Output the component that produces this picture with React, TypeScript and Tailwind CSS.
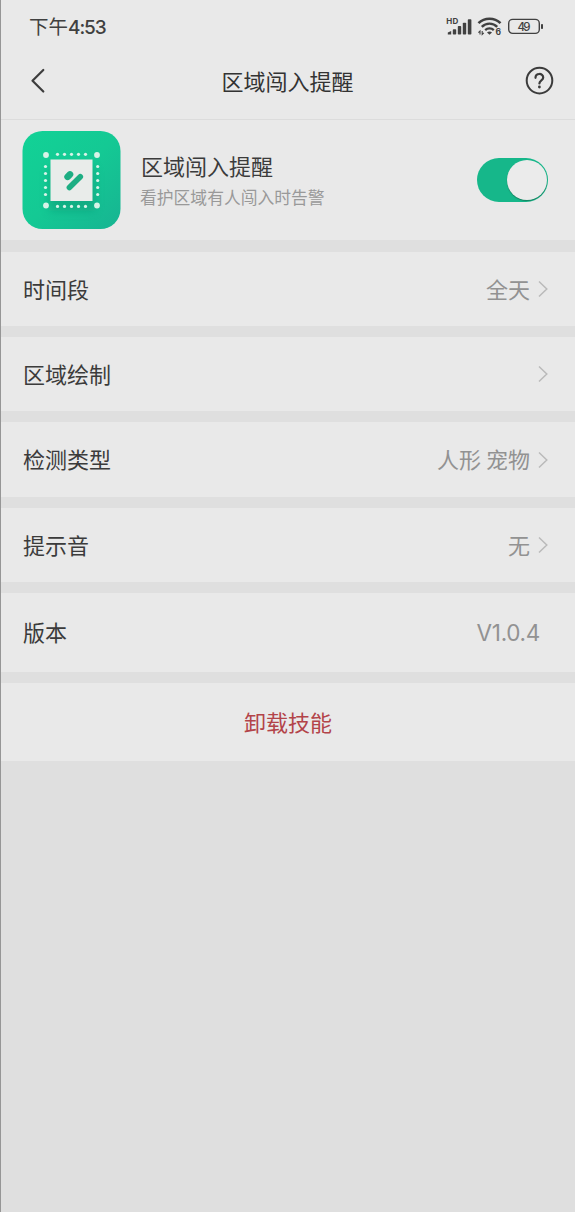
import React from "react";

type RowProps = {
    label: string;
    value?: string;
    arrow?: boolean;
    className?: string;
}

function StatusBar() {
    return (
        <div className="flex h-[42px] items-start justify-between pl-[28px] pr-[31px] pt-[12px]">
            <span className="text-[19.5px] leading-[28px] text-[#404040]">
                下午<span className="font-[Inter] text-[19px] font-medium tracking-[-1.1px]">4:53</span>
            </span>
            <div className="mt-[4px] flex items-start text-[#414141]">
                <svg width="27" height="20" viewBox="0 0 27 20" fill="currentColor">
                    <text x="0.3" y="8" fontSize="8" fontWeight="700" fontFamily="Inter" textLength="12">HD</text>
                    <path d="M1.8 18.5V16.6L5.2 15V18.5Z" />
                    <rect x="6.8" y="13.2" width="3.4" height="5.3" rx="0.8" />
                    <rect x="11.8" y="10" width="3.4" height="8.5" rx="0.8" />
                    <rect x="16.8" y="6.8" width="3.4" height="11.7" rx="0.8" />
                    <rect x="21.8" y="3.2" width="3.6" height="15.3" rx="0.8" />
                </svg>
                <svg className="ml-[4px]" width="25" height="20" viewBox="0 0 25 20" fill="none" stroke="currentColor">
                    <path d="M1.5 7.2C7.5 1.2 17.5 1.2 23.5 7.2" strokeWidth="2.6" />
                    <path d="M4.8 10.8C9 6.6 16 6.6 20.2 10.8" strokeWidth="2.4" />
                    <path d="M8.2 14.1C10.6 11.8 14.4 11.8 16.8 14.1" strokeWidth="2.3" />
                    <path d="M10 16.4Q12.5 14.8 15 16.4L12.5 18.8Z" fill="currentColor" stroke="none" />
                    <path d="M3 18.5V15L1.4 16.6M5.2 15V18.5L6.8 16.9" strokeWidth="1.1" />
                    <text x="18.6" y="19" fontSize="8.5" fontWeight="700" fontFamily="Inter" fill="currentColor" stroke="none">6</text>
                </svg>
                <svg className="ml-[5px]" width="37" height="20" viewBox="0 0 37 20">
                    <rect x="1.7" y="3.4" width="30.6" height="14" rx="4" fill="none" stroke="currentColor" strokeWidth="1.4" />
                    <rect x="34" y="8" width="2" height="5" rx="0.8" fill="currentColor" />
                    <text x="17" y="14.6" textAnchor="middle" fontSize="11.5" fontWeight="500" fontFamily="Inter" textLength="13" fill="currentColor">49</text>
                </svg>
            </div>
        </div>
    )
}

function Header() {
    return (
        <header className="flex h-[78px] items-start justify-between border-b border-[#dcdcdc] pl-[28px] pr-[21px]">
            <svg className="mt-[26px]" width="29" height="26" viewBox="0 0 29 26" fill="none">
                <path d="M14.3 2L3.5 12.7L14.3 23.5" stroke="#3d3d3d" strokeWidth="2.2" strokeLinecap="round" strokeLinejoin="round" />
            </svg>
            <h1 className="mt-[22px] mr-[7px] text-[22px] leading-[32px] text-[#333333]">区域闯入提醒</h1>
            <svg className="mt-[24px]" width="30" height="30" viewBox="0 0 30 30" fill="none" stroke="#3b3b3b">
                <circle cx="15.5" cy="14.6" r="12.8" strokeWidth="2" />
                <path d="M11.5 11.8C11.5 6.8 19.2 6.7 19.2 11.5C19.2 14.5 15.4 14.2 15.4 17.5" strokeWidth="2.2" strokeLinecap="round" />
                <circle cx="15.4" cy="21" r="1.4" fill="#3b3b3b" stroke="none" />
            </svg>
        </header>
    )
}

function SkillIcon() {
    const dots = [57.5, 64.5, 71.5, 78.5, 85.5];
    return (
        <svg width="100" height="100" viewBox="21 130 100 100" className="shrink-0">
            <defs>
                <linearGradient id="skill" x1="0" y1="0" x2="1" y2="1">
                    <stop offset="0" stopColor="#12d296" />
                    <stop offset="0.5" stopColor="#14c994" />
                    <stop offset="1" stopColor="#17b492" />
                </linearGradient>
                <filter id="soft" x="-50%" y="-50%" width="200%" height="200%">
                    <feGaussianBlur stdDeviation="4" />
                </filter>
            </defs>
            <rect x="22.5" y="131" width="98" height="98" rx="20" fill="url(#skill)" />
            <rect x="49" y="168" width="46" height="43" fill="#109773" opacity="0.5" filter="url(#soft)" />
            <rect x="50.5" y="159.5" width="42" height="41.5" fill="#e9ecea" />
            <g fill="#d8f3e8">
                {dots.map((p) => (
                    <React.Fragment key={p}>
                        <circle cx={p} cy="154.3" r="1.6" />
                        <circle cx={p} cy="206.4" r="1.6" />
                        <circle cx="45.5" cy={p + 109} r="1.6" />
                        <circle cx="97.7" cy={p + 109} r="1.6" />
                    </React.Fragment>
                ))}
                <circle cx="46" cy="155" r="2.9" />
                <circle cx="97" cy="155" r="2.9" />
                <circle cx="46" cy="205.5" r="2.9" />
                <circle cx="97" cy="205.5" r="2.9" />
            </g>
            <g stroke="#1dae83" strokeLinecap="round">
                <path d="M67.6 176.8L70 174.4" strokeWidth="6.6" />
                <path d="M69.4 187.6L80.3 176.8" strokeWidth="5.6" />
            </g>
        </svg>
    )
}

function Toggle() {
    return (
        <button role="switch" aria-checked="true" className="flex h-[44px] w-[71px] items-center justify-end rounded-full bg-[#16b78a] pr-[1px]">
            <span className="h-[40px] w-[40px] rounded-full bg-[#ebebeb] shadow-[0_1px_1px_#15805f]" />
        </button>
    )
}

function Row({ label, value, arrow = true, className = "h-[74px]" }: RowProps) {
    return (
        <div className={`flex items-center justify-between bg-[#e9e9e9] pl-[22px] text-[22px] ${arrow ? "pr-[26px]" : "pr-[35px]"} ${className}`}>
            <span className="-mt-[2px] text-[#3b3b3b]">{label}</span>
            <span className="flex items-center text-[#929292]">
                <span className={arrow ? "-mt-[2px]" : "mt-px font-[Inter] text-[22.5px] tracking-[-0.3px]"}>{value}</span>
                {arrow && (
                    <svg className="ml-[7px]" width="12" height="18" viewBox="0 0 12 18" fill="none">
                        <path d="M2 1.5L9.8 9L2 16.5" stroke="#bababa" strokeWidth="1.5" />
                    </svg>
                )}
            </span>
        </div>
    )
}

export default function App() {
    return (
        <div className="min-h-[1212px] w-full border-l border-[#969696] bg-[#dfdfdf] font-['Noto_Sans_CJK_SC',sans-serif]">
            <div className="bg-[#e9e9e9]">
                <StatusBar />
                <Header />
                <section className="flex h-[120px] items-center pl-[20px] pr-[27px]">
                    <SkillIcon />
                    <div className="ml-[20px] flex-1">
                        <h2 className="-mt-px text-[22px] leading-[32px] text-[#3b3b3b]">区域闯入提醒</h2>
                        <p className="mt-[4px] -ml-px text-[16.8px] leading-[25px] text-[#999999]">看护区域有人闯入时告警</p>
                    </div>
                    <Toggle />
                </section>
            </div>
            <div className="mt-[12px] flex flex-col gap-[11px]">
                <Row label="时间段" value="全天" />
                <Row label="区域绘制" />
                <Row label="检测类型" value="人形 宠物" className="h-[75px]" />
                <Row label="提示音" value="无" />
                <Row label="版本" value="V1.0.4" arrow={false} className="h-[79px]" />
                <button className="h-[78px] bg-[#e9e9e9] pb-[2px] text-[22px] text-[#b34449]">卸载技能</button>
            </div>
        </div>
    )
}
